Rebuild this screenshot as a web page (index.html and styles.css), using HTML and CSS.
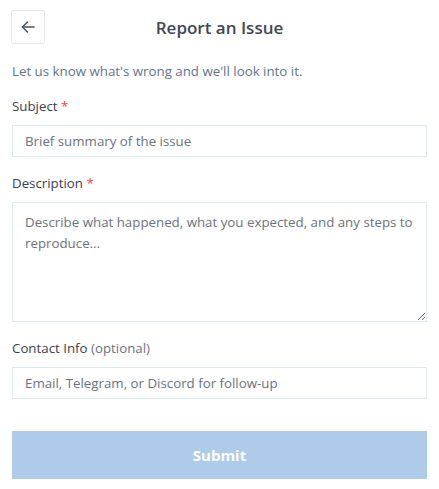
FILE: index.html
```html
<!DOCTYPE html>
<html lang="en">
<head>
<meta charset="utf-8">
<title>Report an Issue</title>
<link rel="stylesheet" href="styles.css">
</head>
<body>
<div class="page">
  <header class="header">
    <button class="back" type="button" aria-label="Back">
      <svg width="18" height="18" viewBox="0 0 18 18" fill="none" stroke="#4b5563" stroke-width="1.6" stroke-linecap="round" stroke-linejoin="round"><path d="M15 9H3.5"/><path d="M8.5 4L3.5 9l5 5"/></svg>
    </button>
    <h1 class="title">Report an Issue</h1>
    <span class="spacer"></span>
  </header>
  <p class="intro">Let us know what's wrong and we'll look into it.</p>
  <form class="form">
    <div class="field">
      <label class="label">Subject <span class="req">*</span></label>
      <input class="input" type="text" placeholder="Brief summary of the issue">
    </div>
    <div class="field">
      <label class="label">Description <span class="req">*</span></label>
      <textarea class="textarea" placeholder="Describe what happened, what you expected, and any steps to reproduce..."></textarea>
    </div>
    <div class="field">
      <label class="label">Contact Info <span class="opt">(optional)</span></label>
      <input class="input" type="text" placeholder="Email, Telegram, or Discord for follow-up">
    </div>
    <button class="submit" type="button">Submit</button>
  </form>
</div>
</body>
</html>
```
FILE: styles.css
```css
* { box-sizing: border-box; }
html, body { margin: 0; padding: 0; background: #fff; }
body {
  font-family: "Open Sans", "Noto Sans", sans-serif;
  color: #374151;
}
.page { padding: 10px 12px 0 12px; }
.header {
  display: grid;
  grid-template-columns: 34px 1fr 34px;
  align-items: center;
  height: 34px;
}
.back {
  width: 34px; height: 34px;
  margin-left: -1px;
  border: 1px solid #e5e7eb;
  background: #fff;
  border-radius: 2px;
  padding: 0;
  display: flex; align-items: center; justify-content: center;
}
.title {
  margin: 0;
  text-align: center;
  font-size: 17px;
  font-weight: 600;
  color: #3f4756;
}
.intro {
  margin: 17px 0 0 0;
  font-size: 13.3px;
  line-height: 20px;
  color: #64748b;
}
.form { margin-top: 15px; }
.field { margin-bottom: 16px; }
.label {
  display: block;
  font-size: 13.3px;
  line-height: 20px;
  margin-bottom: 9px;
  color: #374151;
}
.req { color: #ef4444; }
.opt { color: #6b7280; }
.input, .textarea {
  display: block;
  width: 100%;
  border: 1px solid #e2e8f0;
  border-radius: 0;
  font-family: inherit;
  font-size: 13.3px;
  color: #374151;
  background: #fff;
  padding: 0 12px;
  outline: none;
}
.input { height: 32px; }
.textarea {
  height: 120px;
  padding: 9px 12px 8px;
  line-height: 21px;
  resize: vertical;
}
.input::placeholder, .textarea::placeholder { color: #6b7280; opacity: 1; }
.submit {
  display: block;
  width: 100%;
  height: 48px;
  margin-top: 32px;
  border: none;
  border-radius: 0;
  background: #aecbe9;
  color: #fff;
  font-family: inherit;
  font-size: 15px;
  font-weight: 700;
}
```
